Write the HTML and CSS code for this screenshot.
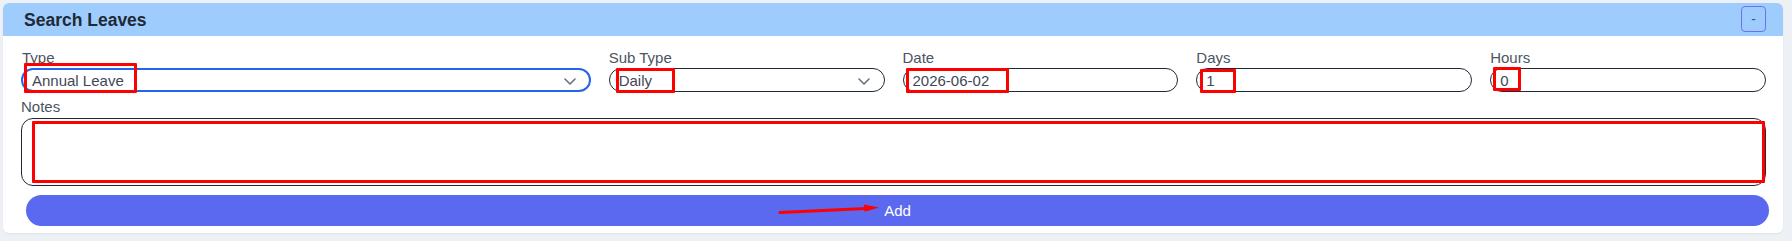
FILE: index.html
```html
<!DOCTYPE html>
<html lang="en">
<head>
  <meta charset="UTF-8" />
  <meta name="viewport" content="width=device-width, initial-scale=1.0">
  <title>Search Leaves</title>
  <link rel="stylesheet" href="styles.css">
</head>
<body>
  <div class="page">
    <!-- Panel -->
    <div class="card">
      <div class="card-header">
        <h2>Search Leaves</h2>
        <button class="collapse-btn">-</button>
      </div>

      <div class="card-body">
        <div class="form-grid">
          <div class="field span-2">
            <label>Type</label>
            <div class="select-wrap">
              <select class="control focused">
                <option>Annual Leave</option>
                <option>Sick Leave</option>
              </select>
              <svg class="chevron" width="12" height="7" viewBox="0 0 12 7"><path d="M1 1 L6 6 L11 1" fill="none" stroke="#6b7280" stroke-width="1.6" stroke-linecap="round" stroke-linejoin="round"/></svg>
            </div>
          </div>
          <div class="field">
            <label>Sub Type</label>
            <div class="select-wrap">
              <select class="control">
                <option>Daily</option>
                <option>Hourly</option>
              </select>
              <svg class="chevron" width="12" height="7" viewBox="0 0 12 7"><path d="M1 1 L6 6 L11 1" fill="none" stroke="#6b7280" stroke-width="1.6" stroke-linecap="round" stroke-linejoin="round"/></svg>
            </div>
          </div>
          <div class="field">
            <label>Date</label>
            <input class="control" type="text" value="2026-06-02">
          </div>
          <div class="field">
            <label>Days</label>
            <input class="control" type="text" value="1">
          </div>
          <div class="field">
            <label>Hours</label>
            <input class="control" type="text" value="0">
          </div>
        </div>

        <div class="field notes-field">
          <label>Notes</label>
          <textarea class="notes"></textarea>
        </div>

        <button class="add-btn">Add</button>
      </div>
    </div>

    <!-- Marcas rojas encima -->
    <div class="mark mark-type"></div>
    <div class="mark mark-subtype"></div>
    <div class="mark mark-date"></div>
    <div class="mark mark-days"></div>
    <div class="mark mark-hours"></div>
    <div class="mark mark-notes"></div>
    <svg class="arrow" width="110" height="20" viewBox="0 0 110 20">
      <path d="M5 12.6 L91 8.4" stroke="#f00" stroke-width="3" stroke-linecap="round" fill="none"/>
      <polygon points="104,7.6 89,4.6 89.5,11.8" fill="#f00"/>
    </svg>
  </div>
</body>
</html>
```

FILE: styles.css
```css
/* General */
body {
  margin: 0;
  padding: 0;
  font-family: "Liberation Sans", Arial, sans-serif;
  background-color: #edf1f5;
  color: #374151;
}

.page {
  position: relative;
  padding: 3px 9px 8px 3px;
}

/* Panel */
.card {
  background-color: #fff;
  border-radius: 6px;
  overflow: hidden;
  box-shadow: 0 1px 2px rgba(0, 0, 0, 0.06);
}

.card-header {
  height: 33px;
  display: flex;
  align-items: center;
  justify-content: space-between;
  padding: 0 17px 0 21px;
  background-color: #9ecdfd;
}

.card-header h2 {
  margin: 0;
  font-size: 17.5px;
  font-weight: bold;
  line-height: 20px;
  color: #1f2937;
}

.collapse-btn {
  width: 25px;
  height: 26px;
  margin-top: -1px;
  padding: 0;
  border: 1.5px solid #6d72f2;
  border-radius: 4px;
  background: transparent;
  color: #4b5563;
  font-family: inherit;
  font-size: 14px;
}

.card-body {
  padding: 13px 17px 7px 18px;
}

/* Form */
.form-grid {
  display: grid;
  grid-template-columns: repeat(6, 1fr);
  column-gap: 18px;
}

.span-2 {
  grid-column: span 2;
}

.field label {
  display: block;
  font-size: 15px;
  line-height: 17px;
  margin-bottom: 2px;
  color: #4b5563;
}

.span-2 label {
  padding-left: 1px;
}

.control {
  display: block;
  width: 100%;
  height: 24px;
  box-sizing: border-box;
  margin: 0;
  padding: 0 9px;
  border: 1px solid #1f2937;
  border-radius: 9999px;
  background-color: #fff;
  font-family: inherit;
  font-size: 15px;
  color: #3f4756;
  outline: none;
  appearance: none;
  -webkit-appearance: none;
}

.control.focused {
  border: 2px solid #2563eb;
}

.select-wrap {
  position: relative;
}

.chevron {
  position: absolute;
  right: 15px;
  top: 10px;
}

.notes-field {
  margin-top: 6px;
}

.notes-field label {
  margin-bottom: 3px;
}

.notes {
  display: block;
  width: 100%;
  height: 68px;
  box-sizing: border-box;
  margin: 0;
  border: 1px solid #1f2937;
  border-radius: 12px;
  resize: none;
  font-family: inherit;
  outline: none;
}

.add-btn {
  display: block;
  width: calc(100% - 2px);
  height: 31px;
  margin: 9px 0 0 5px;
  border: none;
  border-radius: 16px;
  background-color: #5b68f0;
  color: #fff;
  font-family: inherit;
  font-size: 15px;
}

/* Red annotations */
.mark {
  position: absolute;
  box-sizing: border-box;
  border: 3px solid #f00;
  border-radius: 1px;
}

.mark-type { left: 24px; top: 63px; width: 113px; height: 30px; }
.mark-subtype { left: 616px; top: 68px; width: 59px; height: 25px; }
.mark-date { left: 906px; top: 68px; width: 103px; height: 25px; }
.mark-days { left: 1200px; top: 69px; width: 36px; height: 24px; }
.mark-hours { left: 1493px; top: 67px; width: 28px; height: 24px; }
.mark-notes { left: 32px; top: 121px; width: 1733px; height: 62px; }

.arrow {
  position: absolute;
  left: 775px;
  top: 200px;
}
```
